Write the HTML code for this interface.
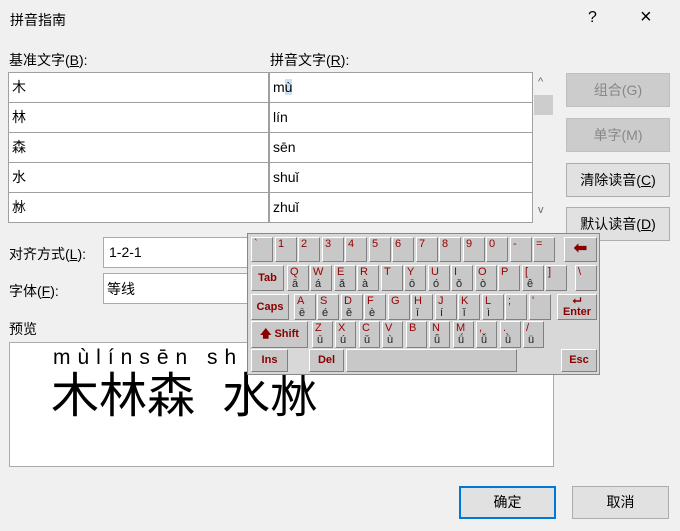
<!DOCTYPE html>
<html><head><meta charset="utf-8"><style>
*{box-sizing:border-box;margin:0;padding:0}
body{width:680px;height:531px;background:#f0f0f0;font-family:"Liberation Sans","Noto Sans CJK SC",sans-serif;font-size:14px;color:#000;position:relative;overflow:hidden}
.a{position:absolute}
.cell{position:absolute;background:#fff;height:29px;line-height:29px;padding-left:3px;font-size:14px}
.btn{position:absolute;border:1px solid #adadad;background:#e1e1e1;text-align:center;font-size:14px}
.kb{position:absolute;left:247px;top:233px;width:353px;height:142px;background:#d8d8d8;border:1px solid #888}
.k{position:absolute;background:#c8c8c8;border-top:1px solid #fff;border-left:1px solid #fff;border-right:1px solid #808080;border-bottom:1px solid #808080;font-family:"Liberation Sans",sans-serif;font-size:11px;color:#333;line-height:11px}
.k i{font-style:normal;position:absolute;left:2px;top:1px;color:#900}
.k b{font-weight:normal;position:absolute;left:4px;top:13px;color:#222;font-size:11px}
.k.w{color:#800;font-weight:bold;font-size:11px;text-align:center}
</style></head><body>
<div class="a" style="left:10px;top:10px;font-size:14px">拼音指南</div>
<div class="a" style="left:588px;top:9px;font-size:16px">?</div>
<div class="a" style="left:640px;top:6px;font-size:20px">×</div>
<div class="a" style="left:9px;top:50px">基准文字(<u>B</u>):</div>
<div class="a" style="left:270px;top:50px">拼音文字(<u>R</u>):</div>
<div class="a" style="left:8px;top:72px;width:525px;height:151px;background:#a0a0a0"></div>
<div class="cell" style="left:9px;top:73px;width:259px">木</div><div class="cell" style="left:270px;top:73px;width:262px">m<span style="background:#cce0f5">ù</span></div>
<div class="cell" style="left:9px;top:103px;width:259px">林</div><div class="cell" style="left:270px;top:103px;width:262px">lín</div>
<div class="cell" style="left:9px;top:133px;width:259px">森</div><div class="cell" style="left:270px;top:133px;width:262px">sēn</div>
<div class="cell" style="left:9px;top:163px;width:259px">水</div><div class="cell" style="left:270px;top:163px;width:262px">shuǐ</div>
<div class="cell" style="left:9px;top:193px;width:259px">沝</div><div class="cell" style="left:270px;top:193px;width:262px">zhuǐ</div>
<div class="a" style="left:538px;top:76px;font-size:11px;color:#666">^</div>
<div class="a" style="left:534px;top:95px;width:19px;height:20px;background:#cdcdcd"></div>
<div class="a" style="left:538px;top:204px;font-size:11px;color:#666">v</div>
<div class="btn" style="left:566px;top:73px;width:104px;height:34px;line-height:32px;color:#888;background:#ccc;border-color:#bfbfbf">组合(G)</div>
<div class="btn" style="left:566px;top:118px;width:104px;height:34px;line-height:32px;color:#888;background:#ccc;border-color:#bfbfbf">单字(M)</div>
<div class="btn" style="left:566px;top:163px;width:104px;height:34px;line-height:32px">清除读音(<u>C</u>)</div>
<div class="btn" style="left:566px;top:207px;width:104px;height:34px;line-height:32px">默认读音(<u>D</u>)</div>
<div class="a" style="left:9px;top:244px">对齐方式(<u>L</u>):</div>
<div class="a" style="left:103px;top:237px;width:160px;height:31px;background:#fff;border:1px solid #aaa;padding:6px 5px">1-2-1</div>
<div class="a" style="left:9px;top:281px">字体(<u>F</u>):</div>
<div class="a" style="left:103px;top:273px;width:160px;height:31px;background:#fff;border:1px solid #aaa;padding:5px 3px">等线</div>
<div class="a" style="left:9px;top:319px">预览</div>
<div class="a" style="left:9px;top:342px;width:545px;height:125px;background:#fff;border:1px solid #aaa"></div>
<div class="a" style="left:53px;top:346px;font-size:21px;letter-spacing:7px">mùlínsēn sh</div>
<div class="a" style="left:51px;top:367px;font-size:48px;line-height:60px">木林森</div>
<div class="a" style="left:222px;top:367px;font-size:48px;line-height:60px">水沝</div>
<div class="btn" style="left:459px;top:486px;width:97px;height:33px;line-height:29px;border:2px solid #0078d7">确定</div>
<div class="btn" style="left:572px;top:486px;width:97px;height:33px;line-height:31px">取消</div>

<div class="kb">
<div class="k" style="left:3px;top:3px;width:22px;height:25px"><i>`</i></div>
<div class="k" style="left:27px;top:3px;width:22px;height:25px"><i>1</i></div>
<div class="k" style="left:50px;top:3px;width:22px;height:25px"><i>2</i></div>
<div class="k" style="left:74px;top:3px;width:22px;height:25px"><i>3</i></div>
<div class="k" style="left:97px;top:3px;width:22px;height:25px"><i>4</i></div>
<div class="k" style="left:121px;top:3px;width:22px;height:25px"><i>5</i></div>
<div class="k" style="left:144px;top:3px;width:22px;height:25px"><i>6</i></div>
<div class="k" style="left:168px;top:3px;width:22px;height:25px"><i>7</i></div>
<div class="k" style="left:191px;top:3px;width:22px;height:25px"><i>8</i></div>
<div class="k" style="left:215px;top:3px;width:22px;height:25px"><i>9</i></div>
<div class="k" style="left:238px;top:3px;width:22px;height:25px"><i>0</i></div>
<div class="k" style="left:262px;top:3px;width:22px;height:25px"><i>-</i></div>
<div class="k" style="left:285px;top:3px;width:22px;height:25px"><i>=</i></div>
<div class="k w" style="left:316px;top:3px;width:33px;height:25px;line-height:22px;font-size:16px">⬅</div>
<div class="k w" style="left:3px;top:31px;width:33px;height:26px;line-height:24px">Tab</div>
<div class="k" style="left:39px;top:31px;width:22px;height:26px"><i>Q</i><b>ā</b></div>
<div class="k" style="left:62px;top:31px;width:22px;height:26px"><i>W</i><b>á</b></div>
<div class="k" style="left:86px;top:31px;width:22px;height:26px"><i>E</i><b>ǎ</b></div>
<div class="k" style="left:109px;top:31px;width:22px;height:26px"><i>R</i><b>à</b></div>
<div class="k" style="left:133px;top:31px;width:22px;height:26px"><i>T</i></div>
<div class="k" style="left:156px;top:31px;width:22px;height:26px"><i>Y</i><b>ō</b></div>
<div class="k" style="left:180px;top:31px;width:22px;height:26px"><i>U</i><b>ó</b></div>
<div class="k" style="left:203px;top:31px;width:22px;height:26px"><i>I</i><b>ǒ</b></div>
<div class="k" style="left:227px;top:31px;width:22px;height:26px"><i>O</i><b>ò</b></div>
<div class="k" style="left:250px;top:31px;width:22px;height:26px"><i>P</i></div>
<div class="k" style="left:274px;top:31px;width:22px;height:26px"><i>[</i><b>ê</b></div>
<div class="k" style="left:297px;top:31px;width:22px;height:26px"><i>]</i></div>
<div class="k" style="left:327px;top:31px;width:22px;height:26px"><i>\</i></div>
<div class="k w" style="left:3px;top:60px;width:38px;height:26px;line-height:24px">Caps</div>
<div class="k" style="left:46px;top:60px;width:22px;height:26px"><i>A</i><b>ē</b></div>
<div class="k" style="left:69px;top:60px;width:22px;height:26px"><i>S</i><b>é</b></div>
<div class="k" style="left:93px;top:60px;width:22px;height:26px"><i>D</i><b>ě</b></div>
<div class="k" style="left:116px;top:60px;width:22px;height:26px"><i>F</i><b>è</b></div>
<div class="k" style="left:140px;top:60px;width:22px;height:26px"><i>G</i></div>
<div class="k" style="left:163px;top:60px;width:22px;height:26px"><i>H</i><b>ī</b></div>
<div class="k" style="left:187px;top:60px;width:22px;height:26px"><i>J</i><b>í</b></div>
<div class="k" style="left:210px;top:60px;width:22px;height:26px"><i>K</i><b>ǐ</b></div>
<div class="k" style="left:234px;top:60px;width:22px;height:26px"><i>L</i><b>ì</b></div>
<div class="k" style="left:257px;top:60px;width:22px;height:26px"><i>;</i></div>
<div class="k" style="left:281px;top:60px;width:22px;height:26px"><i>'</i></div>
<div class="k w" style="left:309px;top:60px;width:40px;height:26px;line-height:11px;padding-top:1px">⮠<br>Enter</div>
<div class="k w" style="left:3px;top:87px;width:57px;height:27px;line-height:25px">🡅 Shift</div>
<div class="k" style="left:64px;top:87px;width:21px;height:27px"><i>Z</i><b>ū</b></div>
<div class="k" style="left:87px;top:87px;width:21px;height:27px"><i>X</i><b>ú</b></div>
<div class="k" style="left:111px;top:87px;width:21px;height:27px"><i>C</i><b>ǔ</b></div>
<div class="k" style="left:134px;top:87px;width:21px;height:27px"><i>V</i><b>ù</b></div>
<div class="k" style="left:158px;top:87px;width:21px;height:27px"><i>B</i></div>
<div class="k" style="left:181px;top:87px;width:21px;height:27px"><i>N</i><b>ǖ</b></div>
<div class="k" style="left:205px;top:87px;width:21px;height:27px"><i>M</i><b>ǘ</b></div>
<div class="k" style="left:228px;top:87px;width:21px;height:27px"><i>,</i><b>ǚ</b></div>
<div class="k" style="left:252px;top:87px;width:21px;height:27px"><i>.</i><b>ǜ</b></div>
<div class="k" style="left:275px;top:87px;width:21px;height:27px"><i>/</i><b>ü</b></div>
<div class="k w" style="left:3px;top:115px;width:37px;height:23px;line-height:21px">Ins</div>
<div class="k w" style="left:61px;top:115px;width:35px;height:23px;line-height:21px">Del</div>
<div class="k" style="left:98px;top:115px;width:171px;height:23px"></div>
<div class="k w" style="left:313px;top:115px;width:36px;height:23px;line-height:21px">Esc</div>
</div>
</body></html>
